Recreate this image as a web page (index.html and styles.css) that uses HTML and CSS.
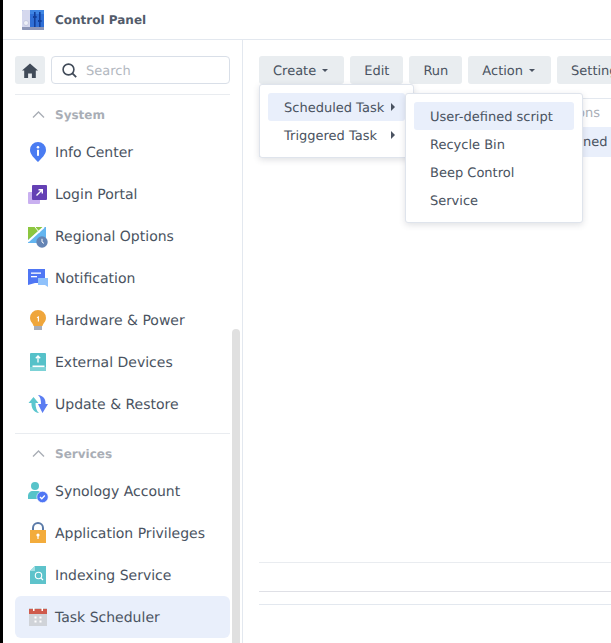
FILE: index.html
```html
<!DOCTYPE html>
<html lang="en">

<head>
    <meta charset="UTF-8">
    <title>Control Panel</title>
    <link rel="stylesheet" href="styles.css">
</head>

<body>
    <div class="window">
        <div class="titlebar">
            <svg class="logo" width="22" height="20" viewBox="0 0 22 20">
                <rect x="0" y="0" width="22" height="20" rx="1" fill="#2f6fd6" />
                <path d="M0 1a1 1 0 0 1 1-1h7v20H1a1 1 0 0 1-1-1z" fill="#d5d8ee" />
                <path d="M8 0h14v4H8z" fill="#3f86e4" />
                <path d="M0 17h22v2a1 1 0 0 1-1 1H1a1 1 0 0 1-1-1z" fill="#8d97b8" />
                <circle cx="4" cy="13" r="2.5" fill="#eef0f8" stroke="#b4b9d4" stroke-width="0.6" />
                <rect x="12" y="2" width="1.6" height="15" fill="#123f9a" />
                <rect x="17" y="2" width="1.6" height="15" fill="#123f9a" />
                <rect x="11" y="6" width="3.6" height="2" fill="#123f9a" />
                <rect x="16" y="10" width="3.6" height="2" fill="#123f9a" />
            </svg>
            <span class="app-name">Control Panel</span>
        </div>

        <div class="content">
            <!-- left menu -->
            <div class="sidebar">
                <div class="search-row">
                    <div class="home-btn">
                        <svg width="16" height="15" viewBox="0 0 16 15">
                            <path d="M8 .5 16 7.6h-2.2V15H9.9v-4.6H6.1V15H2.2V7.6H0z" fill="#414b59" />
                        </svg>
                    </div>
                    <div class="search-box">
                        <svg width="15" height="15" viewBox="0 0 15 15">
                            <circle cx="6.5" cy="6.5" r="5.4" fill="none" stroke="#414b59" stroke-width="1.6" />
                            <path d="M10.4 10.4 14.2 14.2" stroke="#414b59" stroke-width="1.8" />
                        </svg>
                        <span class="placeholder">Search</span>
                    </div>
                </div>

                <div class="group">
                    <div class="group-title">
                        <svg width="13" height="7" viewBox="0 0 13 7">
                            <path d="M1 6.5 6.5 1 12 6.5" fill="none" stroke="#a9aeb6" stroke-width="1.4" />
                        </svg>
                        <span>System</span>
                    </div>
                    <div class="item">
                        <svg class="icon" viewBox="0 0 24 24">
                            <path d="M12 2a8 8 0 0 1 8 8c0 4.500-4.600 8.500-8 12-3.400-3.500-8-7.500-8-12a8 8 0 0 1 8-8z" fill="#4a7cf2" />
                            <circle cx="12" cy="7.200" r="1.300" fill="#fff" />
                            <rect x="11" y="9.800" width="2" height="6" fill="#fff" />
                        </svg>
                        <span>Info Center</span>
                    </div>
                    <div class="item">
                        <svg class="icon" viewBox="0 0 24 24">
                            <rect x="2" y="10" width="12" height="12" rx="1" fill="#c9b0f0" />
                            <rect x="6" y="3" width="15" height="15" rx="1" fill="#6440b4" />
                            <path d="M10.500 13.500 16 8M12.500 7.800H16.300V11.600" fill="none" stroke="#fff" stroke-width="1.400" />
                        </svg>
                        <span>Login Portal</span>
                    </div>
                    <div class="item">
                        <svg class="icon" viewBox="0 0 24 24">
                            <rect x="2" y="3" width="18" height="16" fill="#63b5f0" />
                            <path d="M2 3h15L2 16z" fill="#8cc63f" />
                            <path d="M18 3 2 17.500" stroke="#fff" stroke-width="2" />
                            <path d="M9 3 13.500 8.500" stroke="#fff" stroke-width="1" />
                            <circle cx="16" cy="18" r="5.700" fill="#6484b4" />
                            <path d="M16 14.800V18l2 1.400" fill="none" stroke="#fff" stroke-width="1" />
                        </svg>
                        <span>Regional Options</span>
                    </div>
                    <div class="item">
                        <svg class="icon" viewBox="0 0 24 24">
                            <path d="M2 3h17v14H9l-7 2z" fill="#4f76f4" />
                            <rect x="5" y="6.500" width="10" height="1.300" fill="#fff" />
                            <rect x="5" y="10" width="6" height="1.300" fill="#fff" />
                            <path d="M12 12h10v9l-3-2h-7z" fill="#8fc1fb" />
                        </svg>
                        <span>Notification</span>
                    </div>
                    <div class="item">
                        <svg class="icon" viewBox="0 0 24 24">
                            <path d="M12 2a8 8 0 0 1 8 8c0 3-2 4.600-3 6.500-.3.6-.4 1-.5 1.500h-9c-.1-.5-.2-.9-.5-1.500C6 14.600 4 13 4 10a8 8 0 0 1 8-8z" fill="#efa63c" />
                            <path d="M11 9.800 12.400 9V13.500" fill="none" stroke="#fff" stroke-width="1.100" />
                            <rect x="8" y="18" width="8" height="4" fill="#a7adb9" />
                        </svg>
                        <span>Hardware &amp; Power</span>
                    </div>
                    <div class="item">
                        <svg class="icon" viewBox="0 0 24 24">
                            <rect x="4" y="3" width="16" height="18" rx="1" fill="#56c1c9" />
                            <rect x="4" y="17" width="16" height="4" fill="#7cd2d6" />
                            <rect x="6.500" y="15.500" width="12" height="1.600" fill="#fff" />
                            <path d="M12 12.500V6M9.800 8.200 12 6l2.200 2.200" fill="none" stroke="#fff" stroke-width="1.300" />
                        </svg>
                        <span>External Devices</span>
                    </div>
                    <div class="item">
                        <svg class="icon" viewBox="0 0 24 24">
                            <path d="M7.500 5 12.500 11H9.500C9.500 15 10.500 19 13 21 8 20.500 5 16 5.500 11H2.500z" fill="#5cc6cf" />
                            <path d="M12 3C17 3.500 20 7 19.500 12H22L16.500 21 12 12H15C15 8 14.500 5 12 3z" fill="#5b7df2" />
                        </svg>
                        <span>Update &amp; Restore</span>
                    </div>
                </div>

                <div class="group">
                    <div class="group-title">
                        <svg width="13" height="7" viewBox="0 0 13 7">
                            <path d="M1 6.500 6.500 1 12 6.500" fill="none" stroke="#a9aeb6" stroke-width="1.400" />
                        </svg>
                        <span>Services</span>
                    </div>
                    <div class="item">
                        <svg class="icon" viewBox="0 0 24 24">
                            <circle cx="9" cy="7" r="4" fill="#57c3c9" />
                            <path d="M2 20v-3c0-3 2-5 5-5h4c3 0 5 2 5 5v3z" fill="#57c3c9" />
                            <circle cx="16.500" cy="18" r="5.700" fill="#4f76f4" stroke="#fff" stroke-width="0.600" />
                            <path d="M14 18l1.800 1.800 3-3.300" fill="none" stroke="#fff" stroke-width="1.300" />
                        </svg>
                        <span>Synology Account</span>
                    </div>
                    <div class="item">
                        <svg class="icon" viewBox="0 0 24 24">
                            <path d="M7 10V7a5 5 0 0 1 10 0v3" fill="none" stroke="#5a7aa8" stroke-width="2" />
                            <rect x="4" y="9" width="16" height="13" fill="#f3ac3c" />
                            <circle cx="12" cy="14" r="1.600" fill="#fff" />
                            <rect x="11.400" y="14" width="1.200" height="4" fill="#fff" />
                        </svg>
                        <span>Application Privileges</span>
                    </div>
                    <div class="item">
                        <svg class="icon" viewBox="0 0 24 24">
                            <path d="M9 3h11v18H4V8z" fill="#5ec3cb" />
                            <path d="M9 3v5H4z" fill="#a5e0e3" />
                            <circle cx="12.500" cy="12.500" r="3.200" fill="none" stroke="#fff" stroke-width="1.100" />
                            <path d="M14.800 14.800 17 17" stroke="#fff" stroke-width="1.200" />
                        </svg>
                        <span>Indexing Service</span>
                    </div>
                    <div class="item selected">
                        <svg class="icon" viewBox="0 0 24 24">
                            <rect x="3" y="3" width="18" height="18" fill="#d0d3d8" />
                            <rect x="3" y="4" width="18" height="5" fill="#cf5a4c" />
                            <rect x="7" y="3" width="1.500" height="3" fill="#fff" />
                            <rect x="15.500" y="3" width="1.500" height="3" fill="#fff" />
                            <path d="M8.500 11.500h2v2h-2zM13.500 11.500h2v2h-2zM8.500 15.500h2v2h-2zM13.500 15.500h2v2h-2z" fill="#fff" />
                        </svg>
                        <span>Task Scheduler</span>
                    </div>
                </div>

                <div class="scroll-thumb"></div>
            </div>

            <!-- task list -->
            <div class="main">
                <div class="toolbar">
                    <div class="btn">Create<i class="caret"></i></div>
                    <div class="btn">Edit</div>
                    <div class="btn">Run</div>
                    <div class="btn">Action<i class="caret"></i></div>
                    <div class="btn">Settings</div>
                </div>

                <div class="grid">
                    <div class="grid-head"><span>Actions</span></div>
                    <div class="grid-row"><span>User-defined script</span></div>
                </div>

                <div class="grid-foot">
                    <div class="foot-line"></div>
                    <div class="foot-line dark"></div>
                    <div class="foot-line last"></div>
                </div>

                <div class="menu menu-create">
                    <div class="menu-item active">Scheduled Task<i class="arrow"></i></div>
                    <div class="menu-item">Triggered Task<i class="arrow"></i></div>
                </div>

                <div class="menu menu-sub">
                    <div class="menu-item active">User-defined script</div>
                    <div class="menu-item">Recycle Bin</div>
                    <div class="menu-item">Beep Control</div>
                    <div class="menu-item">Service</div>
                </div>
            </div>
        </div>
    </div>
</body>

</html>
```

FILE: styles.css
```css
* {
    margin: 0;
    padding: 0;
    box-sizing: border-box;
}

html,
body {
    height: 100%;
    overflow: hidden;
}

body {
    background: #fff;
    color: #4a5361;
    font-family: "DejaVu Sans", sans-serif;
    font-size: 13px;
    text-rendering: geometricPrecision;
}

.window {
    height: 643px;
    border-left: 3px solid #000;
    display: flex;
    flex-direction: column;
}

.titlebar {
    height: 40px;
    flex: none;
    border-bottom: 1px solid #e3e8ef;
    display: flex;
    align-items: center;
    padding-left: 19px;
    gap: 11px;
}

.logo {
    flex: none;
}

.app-name {
    font-size: 12px;
    font-weight: bold;
    color: #535c6b;
}

.content {
    flex: 1;
    display: flex;
    min-height: 0;
}

/* left menu */
.sidebar {
    width: 240px;
    flex: none;
    border-right: 1px solid #e3e8ef;
    padding: 16px 12px 0 12px;
    position: relative;
    overflow: hidden;
}

.search-row {
    display: flex;
    gap: 6px;
    height: 39px;
    padding-bottom: 10px;
    border-bottom: 1px solid #e9ecf0;
}

.home-btn {
    width: 30px;
    height: 28px;
    background: #e9edf0;
    border-radius: 3px;
    display: flex;
    align-items: center;
    justify-content: center;
}

.search-box {
    flex: 1;
    height: 28px;
    border: 1px solid #d9dfe8;
    border-radius: 4px;
    display: flex;
    align-items: center;
    gap: 9px;
    padding-left: 10px;
}

.placeholder {
    color: #b3b8bf;
    padding-top: 2px;
}

.group {
    border-bottom: 1px solid #e9ecf0;
    padding-bottom: 8px;
}

.group:last-of-type {
    border-bottom: 0;
}

.group-title {
    height: 36px;
    display: flex;
    align-items: center;
    padding: 3px 0 0 17px;
    gap: 10px;
    font-size: 12px;
    font-weight: bold;
    color: #a9aeb6;
}

.item {
    height: 42px;
    display: flex;
    align-items: center;
    padding-left: 11px;
    gap: 5px;
    border-radius: 6px;
    font-size: 14px;
}

.item span {
    padding-top: 2px;
}

.item.selected {
    background: #e9effb;
}

.icon {
    width: 24px;
    height: 24px;
    flex: none;
}

.scroll-thumb {
    position: absolute;
    left: 229px;
    top: 289px;
    width: 8px;
    height: 330px;
    background: #e0e0e0;
    border-radius: 4px 4px 0 0;
}

/* task list */
.main {
    flex: 1;
    min-width: 0;
    position: relative;
    overflow: hidden;
    padding: 16px 0 0 16px;
}

.toolbar {
    display: flex;
    gap: 6px;
    height: 28px;
}

.btn {
    flex: none;
    height: 28px;
    padding: 2px 14px 0;
    background: #e9edf0;
    border-radius: 3px;
    display: flex;
    align-items: center;
}

.caret {
    width: 0;
    height: 0;
    margin: -2px 2px 0 6px;
    border-left: 3px solid transparent;
    border-right: 3px solid transparent;
    border-top: 3px solid #4a5361;
}

.grid {
    margin-top: 14px;
    width: 360px;
    border-top: 1px solid #e3e8ef;
}

.grid-head {
    height: 28px;
    line-height: 30px;
    width: 341px;
    text-align: right;
    color: #a9aeb6;
    white-space: nowrap;
}

.grid-row {
    height: 30px;
    line-height: 32px;
    background: #e9effb;
    padding-left: 266px;
    white-space: nowrap;
    overflow: hidden;
}

.grid-foot {
    margin-top: 405px;
}

.foot-line {
    height: 1px;
    background: #e9ecf0;
    margin-bottom: 28px;
}

.foot-line.dark {
    background: #dfe0e6;
    margin-bottom: 12px;
}

.foot-line.last {
    background: #e3e8ef;
    margin-bottom: 0;
}

.menu {
    position: absolute;
    background: #fff;
    border: 1px solid #dfe4ec;
    border-radius: 3px;
    box-shadow: 0 2px 6px rgba(60, 70, 90, 0.16);
    padding: 8px;
}

.menu-create {
    left: 16px;
    top: 44px;
    width: 155px;
    height: 74px;
}

.menu-sub {
    left: 162px;
    top: 53px;
    width: 178px;
    height: 130px;
}

.menu-item {
    height: 28px;
    line-height: 32px;
    padding-left: 16px;
    border-radius: 3px;
    position: relative;
    white-space: nowrap;
}

.menu-item.active {
    background: #e9effb;
}

.arrow {
    position: absolute;
    left: 123px;
    top: 10px;
    width: 0;
    height: 0;
    border-top: 4.500px solid transparent;
    border-bottom: 4.500px solid transparent;
    border-left: 4px solid #4a5361;
}
```
